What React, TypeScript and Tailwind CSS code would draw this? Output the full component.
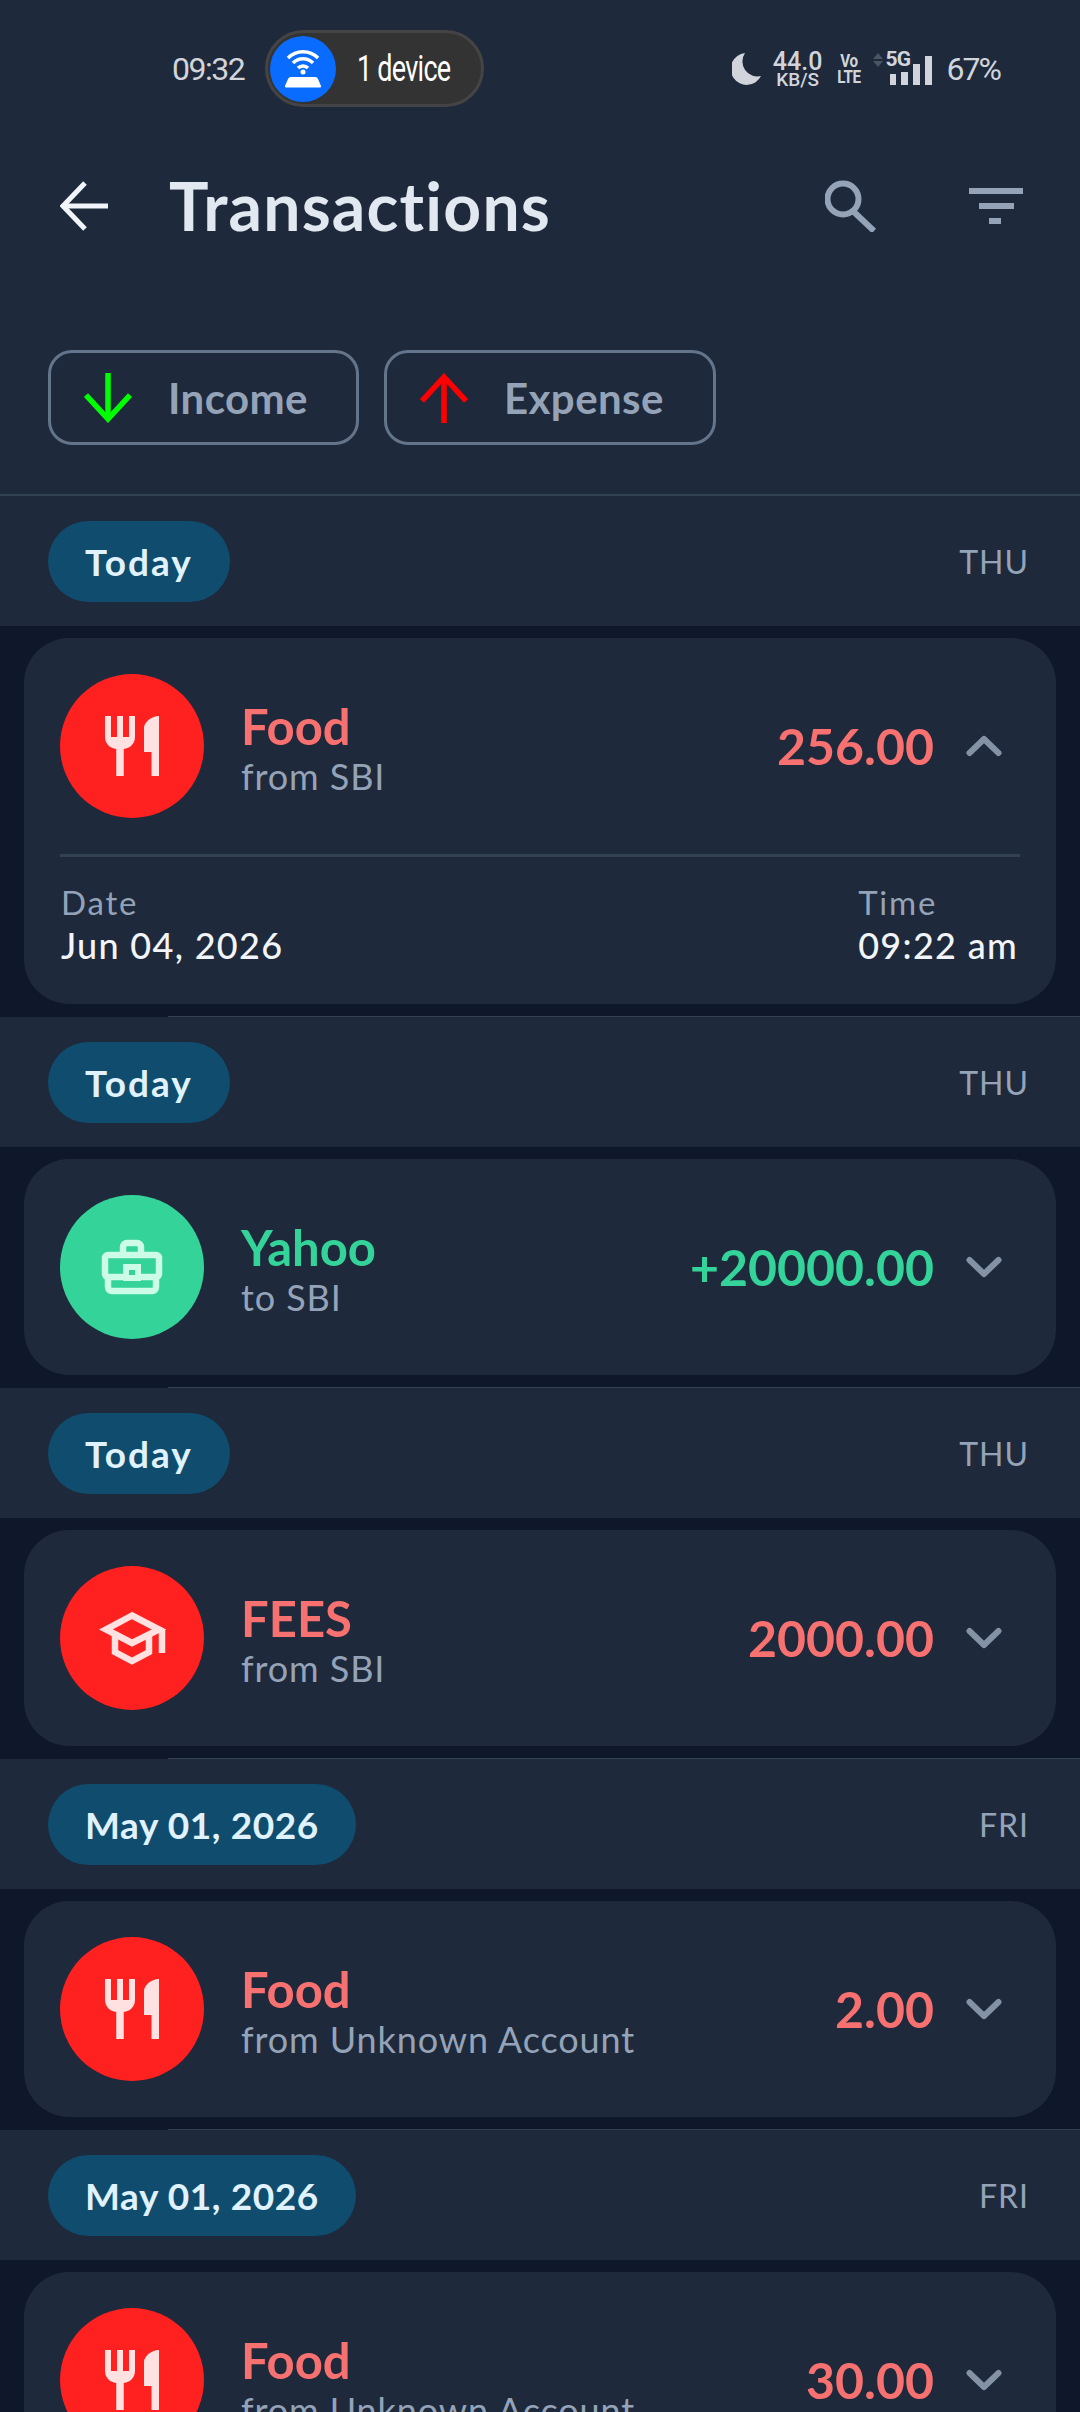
import type { ReactNode } from "react";

type Txn = {
  date: string;
  day: string;
  title: string;
  sub: string;
  amount: string;
  icon: "food" | "work" | "school";
  income?: boolean;
  open?: boolean;
};

const txns: Txn[] = [
  { date: "Today", day: "THU", title: "Food", sub: "from SBI", amount: "256.00", icon: "food", open: true },
  { date: "Today", day: "THU", title: "Yahoo", sub: "to SBI", amount: "+20000.00", icon: "work", income: true },
  { date: "Today", day: "THU", title: "FEES", sub: "from SBI", amount: "2000.00", icon: "school" },
  { date: "May 01, 2026", day: "FRI", title: "Food", sub: "from Unknown Account", amount: "2.00", icon: "food" },
  { date: "May 01, 2026", day: "FRI", title: "Food", sub: "from Unknown Account", amount: "30.00", icon: "food" }
];

function CategoryIcon({ icon }: { icon: Txn["icon"] }) {
  if (icon === "food") {
    return (
      <svg width="72" height="72" viewBox="0 0 24 24" fill="#ffe1e1">
        <path d="M11 9H9V2H7v7H5V2H3v7c0 2.12 1.66 3.84 3.75 3.97V22h2.5v-9.03C11.34 12.84 13 11.12 13 9V2h-2v7zm5-3v8h2.5v8H21V2c-2.76 0-5 2.24-5 4z" />
      </svg>
    );
  }
  if (icon === "work") {
    return (
      <svg width="72" height="72" viewBox="0 0 72 72" fill="none" stroke="#ccfbe7" strokeWidth="6.500" strokeLinejoin="round">
        <path d="M27 24v-8a4 4 0 0 1 4-4h10a4 4 0 0 1 4 4v8" />
        <path d="M12 46v10a4 4 0 0 0 4 4h40a4 4 0 0 0 4-4V46" />
        <rect x="9" y="24" width="54" height="22" rx="3" />
        <rect x="30" y="36" width="12" height="11" fill="#34d399" strokeWidth="6" strokeLinejoin="miter" />
      </svg>
    );
  }
  return (
    <svg width="72" height="72" viewBox="0 0 72 72" fill="none" stroke="#ffe1e1" strokeWidth="6.500">
      <path d="M19 34v16l17 9 17-9V34" />
      <path d="M36 13.500 10 27.500 36 41l27-13.500z" />
      <path d="M63 27.500l3 2V51" />
    </svg>
  );
}

function Chevron({ up }: { up?: boolean }) {
  return (
    <svg width="36" height="22" viewBox="0 0 36 22" fill="none" stroke="#8492a6" strokeWidth="6" strokeLinecap="round" strokeLinejoin="round">
      <path d={up ? "M3.500 18 18 4l14.500 14" : "M3.500 4 18 18 32.500 4"} />
    </svg>
  );
}

function StatusBar() {
  return (
    <div className="flex h-[137px] items-center pl-[172px] pr-[80px] font-[Roboto,sans-serif] text-[#d1d5db]">
      <span className="w-[93px] text-[32px] leading-none tracking-[-1.5px]">09:32</span>
      <div className="flex h-[77px] w-[219px] items-center rounded-full border-[3px] border-[#444444] bg-[#333333] pl-[2px]">
        <span className="grid h-[66px] w-[66px] shrink-0 place-items-center rounded-full bg-[#0a6cff]">
          <svg width="66" height="66" viewBox="0 0 66 66" fill="none" stroke="white" strokeWidth="3.500">
            <path d="M18 22a21 21 0 0 1 30 0" />
            <path d="M23 27a14 14 0 0 1 20 0" />
            <path d="M28 32a7 7 0 0 1 10 0" />
            <circle cx="33" cy="36" r="2.500" fill="white" stroke="none" />
            <path d="M21 41h24a3 3 0 0 1 3 2l3 7a1 1 0 0 1-1 1.500H16a1 1 0 0 1-1-1.500l3-7a3 3 0 0 1 3-2z" fill="white" stroke="none" />
          </svg>
        </span>
        <span className="ml-[21px] origin-left scale-x-[0.75] whitespace-nowrap text-[36px] leading-none tracking-[-1px] text-white">1 device</span>
      </div>
      <div className="ml-auto flex items-center">
        <svg width="29" height="32" viewBox="0 0 29 32" fill="#d1d5db" className="mr-[11px]">
          <path d="M13 0A16 16 0 1 0 29 23 15 15 0 0 1 13 0z" />
        </svg>
        <div className="mr-[14px] flex w-[52px] flex-col items-center leading-none">
          <span className="text-[25px] font-medium leading-[21px]">44.0</span>
          <span className="text-[19px] font-medium leading-[15px]">KB/S</span>
        </div>
        <div className="mr-[13px] flex w-[22px] scale-x-[0.8] flex-col items-center text-[19px] font-bold leading-[16px] tracking-[-0.5px]">
          <span>Vo</span>
          <span>LTE</span>
        </div>
        <svg width="10" height="14" viewBox="0 0 10 14" fill="#4b5563" className="mb-[18px] mr-[3px]">
          <path d="M5 0l5 6H0zM0 8h10l-5 6z" />
        </svg>
        <div className="relative mr-[15px] flex h-[32px] w-[46px] items-end gap-[5px] pl-[4px]">
          <span className="absolute left-0 top-[-4px] text-[21px] font-bold leading-none tracking-[-1px]">5G</span>
          <span className="h-[11px] w-[7px] bg-[#d1d5db]" />
          <span className="h-[13px] w-[7px] bg-[#d1d5db]" />
          <span className="h-[21px] w-[7px] bg-[#d1d5db]" />
          <span className="h-[29px] w-[7px] bg-[#d1d5db]" />
        </div>
        <span className="text-[32px] leading-none tracking-[-2px]">67%</span>
      </div>
    </div>
  );
}

function Toolbar() {
  return (
    <div className="mt-[19px] flex h-[100px] items-center pl-[60px] pr-[57px]">
      <svg width="48" height="50" viewBox="0 0 48 50" fill="none" stroke="#f1f5f9" strokeWidth="5">
        <path d="M48 25H4" />
        <path d="M25 2 3 25l22 23" />
      </svg>
      <h1 className="ml-[61px] text-[66px] font-bold leading-none tracking-[1.2px] text-[#e2e8f0]">Transactions</h1>
      <svg width="52" height="52" viewBox="0 0 52 52" fill="none" stroke="#94a3b8" strokeWidth="6" className="ml-auto">
        <circle cx="18" cy="19" r="15.500" />
        <path d="M29 32l20 19" />
      </svg>
      <svg width="54" height="36" viewBox="0 0 54 36" fill="#94a3b8" className="ml-[92px]">
        <rect width="54" height="6" />
        <rect x="10" y="15" width="35" height="6" />
        <rect x="20" y="30" width="12" height="6" />
      </svg>
    </div>
  );
}

function FilterChip({ label, width, children }: { label: string; width: string; children: ReactNode }) {
  return (
    <div className={`flex h-[95px] items-center rounded-[24px] border-[3px] border-[#64748b] pl-[33px] ${width}`}>
      {children}
      <span className="ml-[36px] text-[42px] font-bold leading-none tracking-[0.4px] text-[#94a3b8]">{label}</span>
    </div>
  );
}

function DateRow({ date, day }: { date: string; day: string }) {
  return (
    <div className="flex h-[130px] items-center justify-between bg-[#1e293b] pl-[48px] pr-[51px]">
      <span className={`flex h-[81px] items-center rounded-full bg-[#0f4c6e] px-[37px] text-[37px] font-bold leading-none text-[#e0f2fe] ${date === "Today" ? "tracking-[2px]" : "tracking-[0.6px]"}`}>
        {date}
      </span>
      <span className="pt-[2px] text-[32px] leading-none tracking-[1px] text-[#94a3b8]">{day}</span>
    </div>
  );
}

function TxnCard({ txn }: { txn: Txn }) {
  const tone = txn.income ? "text-[#34d399]" : "text-[#f87171]";
  return (
    <div className="mx-[24px] my-[12px] rounded-[45px] bg-[#1e293b]">
      <div className="flex h-[216px] items-center pl-[36px] pr-[54px]">
        <span className={`grid h-[144px] w-[144px] shrink-0 place-items-center rounded-full ${txn.income ? "bg-[#34d399]" : "bg-[#ff2020]"}`}>
          <CategoryIcon icon={txn.icon} />
        </span>
        <div className="ml-[37px] flex flex-col pt-[6px]">
          <span className={`text-[49px] font-bold leading-[54px] ${tone}`}>{txn.title}</span>
          <span className="text-[36px] leading-[46px] tracking-[0.9px] text-[#94a3b8]">{txn.sub}</span>
        </div>
        <span className={`ml-auto text-[50px] font-bold leading-none ${tone}`}>{txn.amount}</span>
        <span className="ml-[32px] flex">
          <Chevron up={txn.open} />
        </span>
      </div>
      {txn.open ? (
        <>
          <div className="mx-[36px] h-[3px] bg-[#334155]" />
          <div className="flex h-[147px] justify-between pl-[37px] pr-[38px] pt-[24px] text-[36px] font-medium tracking-[1.3px]">
            <div>
              <div className="text-[33px] font-normal leading-[42px] tracking-[1.8px] text-[#94a3b8]">Date</div>
              <div className="leading-[44px] text-[#f1f5f9]">Jun 04, 2026</div>
            </div>
            <div>
              <div className="text-[33px] font-normal leading-[42px] tracking-[1.8px] text-[#94a3b8]">Time</div>
              <div className="leading-[44px] text-[#f1f5f9]">09:22 am</div>
            </div>
          </div>
        </>
      ) : null}
    </div>
  );
}

export default function App() {
  return (
    <div className="h-[2412px] w-[1080px] overflow-hidden bg-[#0f172a] font-[Lato,sans-serif]">
      <header className="h-[496px] border-b-2 border-[#334155] bg-[#1e293b]">
        <StatusBar />
        <Toolbar />
        <div className="mt-[94px] flex gap-[25px] pl-[48px]">
          <FilterChip label="Income" width="w-[311px]">
            <svg width="48" height="50" viewBox="0 0 48 50" fill="none" stroke="#00ff00" strokeWidth="5.500">
              <path d="M24 0v46" />
              <path d="M2 22l22 24 22-24" />
            </svg>
          </FilterChip>
          <FilterChip label="Expense" width="w-[332px]">
            <svg width="48" height="50" viewBox="0 0 48 50" fill="none" stroke="#ff0000" strokeWidth="5.500">
              <path d="M24 50V4" />
              <path d="M2 28 24 4l22 24" />
            </svg>
          </FilterChip>
        </div>
      </header>
      {txns.map((txn, i) => (
        <section key={i}>
          {i > 0 ? <div className="ml-[168px] h-px bg-[#334155]" /> : null}
          <DateRow date={txn.date} day={txn.day} />
          <TxnCard txn={txn} />
        </section>
      ))}
    </div>
  );
}
